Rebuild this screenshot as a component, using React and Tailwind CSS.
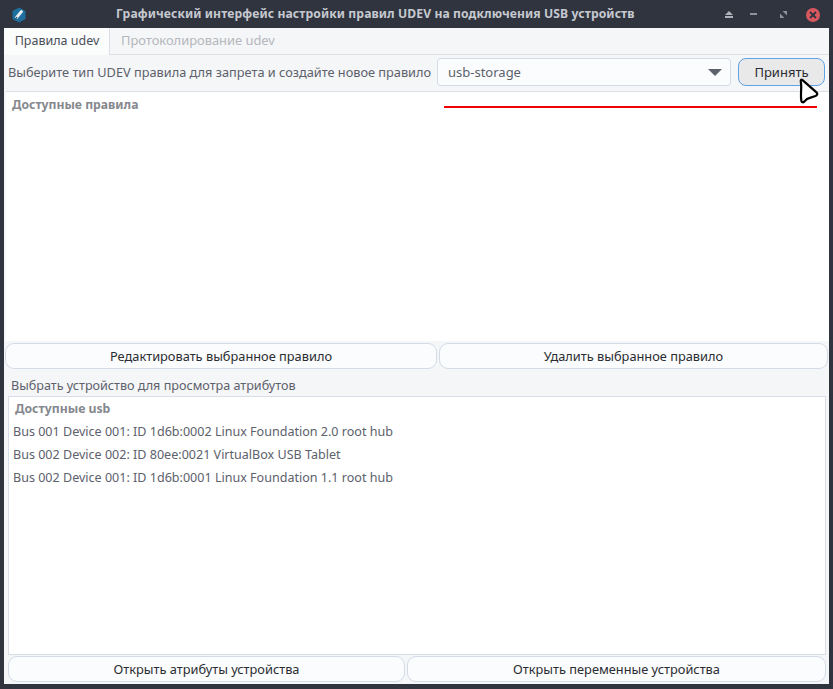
const font = { fontFamily: '"Noto Sans", sans-serif' }

function PlainButton({ className, children }) {
  return (
    <div className={'h-[26px] pt-[1px] flex items-center justify-center rounded-[9px] border border-[#d3dae8] bg-[#fbfcfd] text-[12.8px] text-[#2a2c31] ' + className}>
      {children}
    </div>
  )
}

function ListRow({ children }) {
  return <div className="h-[23px] pt-[2px] flex items-center text-[12.55px] text-[#5c616c]">{children}</div>
}

export default function App() {
  return (
    <div className="relative w-[833px] h-[689px] bg-[#2f343f] flex flex-col overflow-hidden" style={font}>
      {/* title bar */}
      <div className="h-[28px] shrink-0 flex items-center relative">
        <svg className="absolute left-[11px] top-[7px]" width="16" height="16" viewBox="0 0 16 16">
          <path d="M8 0.5 L14.5 4 V12 L8 15.5 L1.5 12 V4 Z" fill="#1f6f9e" />
          <path d="M5.5 10.5 L10.5 4.5" stroke="#e8eef2" strokeWidth="2.8" strokeLinecap="round" />
          <path d="M4.5 12 L6 10" stroke="#0f3f5c" strokeWidth="1.2" />
        </svg>
        <div className="w-full pl-[116px] pt-[1px] text-[12.15px] font-bold text-[#c6c9cf] tracking-[0.1px] whitespace-nowrap">
          Графический интерфейс настройки правил UDEV на подключения USB устройств
        </div>
        <div className="absolute left-[725px] top-[11px] w-[8px] h-[7px]">
          <div className="w-0 h-0 border-l-[4px] border-r-[4px] border-b-[4px] border-l-transparent border-r-transparent border-b-[#aeb2b9]" />
          <div className="w-[8px] h-[2px] mt-[1px] bg-[#aeb2b9]" />
        </div>
        <div className="absolute left-[750px] top-[13px] w-[7px] h-[2px] bg-[#8e929a]" />
        <svg className="absolute left-[780px] top-[11px]" width="7" height="7" viewBox="0 0 7 7">
          <path d="M2.5 0 H7 V4.5 Z" fill="#8e929a" />
          <path d="M0 2.5 V7 H4.5 Z" fill="#8e929a" />
        </svg>
        <div className="absolute left-[806px] top-[8px] w-[14px] h-[14px] rounded-full bg-[#d9575f] flex items-center justify-center">
          <svg width="8" height="8" viewBox="0 0 8 8">
            <path d="M1 1 L7 7 M7 1 L1 7" stroke="#2f343f" strokeWidth="1.8" />
          </svg>
        </div>
      </div>

      {/* window body */}
      <div className="mx-[4px] flex-1 flex flex-col bg-[#f5f6f7] mb-[5px] min-h-0">
        <div className="h-[27px] shrink-0 flex border-b border-[#dcdfe3]">
          <div className="w-[106px] h-[27px] bg-[#fbfcfc] border-r border-[#dcdfe3] flex items-center justify-center pl-[1px] text-[12.5px] text-[#4a4e56]">
            Правила udev
          </div>
          <div className="ml-[11px] flex items-center text-[12.9px] text-[#b4b7bc]">Протоколирование udev</div>
        </div>

        <div className="h-[36px] shrink-0 flex items-start pt-[3px]">
          <div className="ml-[4px] w-[429px] h-[28px] pt-[1px] flex items-center text-[12.75px] text-[#5c616c] whitespace-nowrap">
            Выберите тип UDEV правила для запрета и создайте новое правило
          </div>
          <div className="w-[294px] h-[28px] pt-[1px] rounded-[4px] border border-[#d3dae8] bg-[#fbfcfd] flex items-center justify-between pl-[10px] pr-[8px] text-[13px] text-[#5c616c]">
            usb-storage
            <div className="w-0 h-0 border-l-[7px] border-r-[7px] border-t-[7px] border-l-transparent border-r-transparent border-t-[#5c616c]" />
          </div>
          <div className="ml-[7px] w-[87px] h-[28px] pt-[1px] rounded-[8px] border border-[#5ea3e6] bg-[#e9e9ea] flex items-center justify-center text-[13px] text-[#2a2c31]">
            Принять
          </div>
        </div>

        <div className="h-[250px] shrink-0 bg-white border-t border-[#dcdfe3] ml-[2px] pl-[6px] pt-[4px] text-[12.2px] font-bold text-[#85888e]">
          Доступные правила
        </div>

        <div className="flex gap-[2px] mt-[2px] ml-[1px] mr-[1px] shrink-0">
          <PlainButton className="w-[432px]">Редактировать выбранное правило</PlainButton>
          <PlainButton className="flex-1">Удалить выбранное правило</PlainButton>
        </div>

        <div className="ml-[7px] mt-[7px] h-[20px] shrink-0 flex items-center text-[12.6px] text-[#5c616c]">
          Выбрать устройство для просмотра атрибутов
        </div>

        <div className="ml-[4px] mr-[3px] h-[259px] shrink-0 bg-white border border-[#d8dde6] pl-[4px]">
          <div className="h-[23px] pt-[2px] pl-[2px] flex items-center text-[12.25px] font-bold text-[#85888e]">Доступные usb</div>
          <ListRow>Bus 001 Device 001: ID 1d6b:0002 Linux Foundation 2.0 root hub</ListRow>
          <ListRow>Bus 002 Device 002: ID 80ee:0021 VirtualBox USB Tablet</ListRow>
          <ListRow>Bus 002 Device 001: ID 1d6b:0001 Linux Foundation 1.1 root hub</ListRow>
        </div>

        <div className="flex gap-[2px] mt-[1px] ml-[4px] mr-[3px] shrink-0">
          <PlainButton className="w-[397px]">Открыть атрибуты устройства</PlainButton>
          <PlainButton className="flex-1">Открыть переменные устройства</PlainButton>
        </div>
      </div>

      {/* annotations over the screenshot */}
      <div className="absolute left-[444px] top-[106px] w-[373px] h-[2px] bg-[#f00000]" />
      <svg className="absolute left-[798px] top-[77px]" width="24" height="28" viewBox="0 0 24 28">
        <path d="M4.5 3.2 C3.2 2.2 2.6 3 2.8 4.5 C3.6 9 3.2 12 3 16 C2.9 19 3 22 3.4 24 C3.8 25.6 5.2 25.6 6.2 24.6 C8 22.4 10 21.2 12.5 20.6 L17.5 19 C19.5 18.2 19.8 16.6 18.5 15.4 Z" fill="#fff" stroke="#000" strokeWidth="2.2" strokeLinejoin="round" />
      </svg>
    </div>
  )
}
